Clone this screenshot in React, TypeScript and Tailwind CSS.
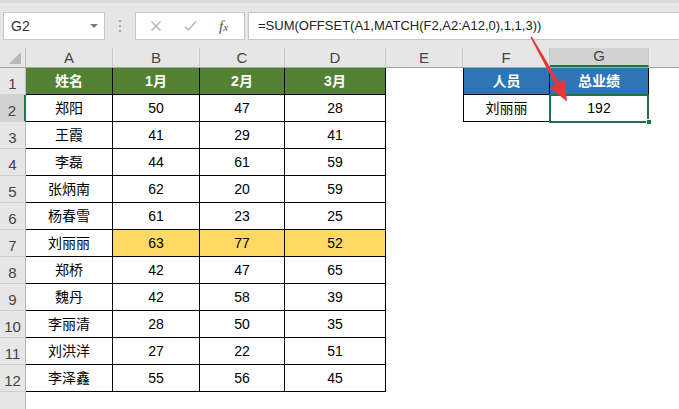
import React from "react";

const cols = [
  { key: "A", w: "w-[87px]" },
  { key: "B", w: "w-[87px]" },
  { key: "C", w: "w-[85px]" },
  { key: "D", w: "w-[101px]" },
  { key: "E", w: "w-[77px]" },
  { key: "F", w: "w-[87px]" },
  { key: "G", w: "w-[99px]" },
];

const data = [
  ["郑阳", 50, 47, 28],
  ["王霞", 41, 29, 41],
  ["李磊", 44, 61, 59],
  ["张炳南", 62, 20, 59],
  ["杨春雪", 61, 23, 25],
  ["刘丽丽", 63, 77, 52],
  ["郑桥", 42, 47, 65],
  ["魏丹", 42, 58, 39],
  ["李丽清", 28, 50, 35],
  ["刘洪洋", 27, 22, 51],
  ["李泽鑫", 55, 56, 45],
];

function RowHead({ n, active }: { n?: number; active?: boolean }) {
  return (
    <div
      className={
        "flex h-full w-[26px] shrink-0 items-end justify-center border-b border-[#d0d0d0] pb-[1px] text-[15px] leading-[18px] text-[#444] " +
        (active
          ? "border-r-2 border-r-[#217346] bg-[#d2d2d2]"
          : "border-r border-r-[#bdbdbd] bg-[#e6e6e6]")
      }
    >
      {n}
    </div>
  );
}

function Arrow() {
  return (
    <svg
      className="pointer-events-none absolute left-0 top-0"
      width="679"
      height="409"
      viewBox="0 0 679 409"
    >
      <polygon
        points="530.4,37.3 531.8,36.6 559.2,82.4 564.4,79.4 567,101.5 549.8,87.7 555.2,84.6"
        fill="#e4373a"
      />
    </svg>
  );
}

export default function App() {
  return (
    <div className="relative h-[409px] w-[679px] overflow-hidden bg-white font-['Liberation_Sans','Noto_Sans_CJK_SC',sans-serif] text-black">
      {/* barra de fórmulas */}
      <div className="flex h-[48px] items-start border-t-[3px] border-t-[#d9d9d9] bg-[#e6e6e6] pt-[9px]">
        <div className="ml-[3px] flex h-[28px] w-[102px] items-center justify-between border border-[#c6c6c6] bg-white pl-[7px] pr-[6px]">
          <span className="text-[14px] text-[#333]">G2</span>
          <span className="h-0 w-0 border-x-[4px] border-t-[4px] border-x-transparent border-t-[#7a7a7a]" />
        </div>
        <div className="flex h-[28px] w-[30px] flex-col items-center justify-center gap-[3px]">
          <span className="h-[2px] w-[2px] bg-[#a8a8a8]" />
          <span className="h-[2px] w-[2px] bg-[#a8a8a8]" />
          <span className="h-[2px] w-[2px] bg-[#a8a8a8]" />
        </div>
        <div className="flex h-[28px] w-[110px] items-center border border-[#c6c6c6] bg-white">
          <svg className="ml-[14px]" width="12" height="12" viewBox="0 0 12 12">
            <path d="M1.5 1.5 L10.5 10.5 M10.5 1.5 L1.5 10.5" stroke="#b3b3b3" strokeWidth="1.4" />
          </svg>
          <svg className="ml-[22px]" width="13" height="12" viewBox="0 0 13 12">
            <path d="M1 6.5 L4.5 10 L12 1.5" stroke="#b3b3b3" strokeWidth="1.5" fill="none" />
          </svg>
          <span className="ml-[22px] font-['Liberation_Serif',serif] text-[15px] italic text-[#555]">
            f<span className="text-[11px]">x</span>
          </span>
        </div>
        <div className="ml-[3px] flex h-[28px] flex-1 items-center border border-r-0 border-[#c6c6c6] bg-white pl-[9px] text-[13px] text-[#222]">
          =SUM(OFFSET(A1,MATCH(F2,A2:A12,0),1,1,3))
        </div>
      </div>

      {/* cabeçalho de colunas */}
      <div className="flex h-[20px] border-b border-[#a6a6a6] bg-[#e6e6e6]">
        <div className="relative w-[26px] shrink-0 border-r border-[#bdbdbd]">
          <span className="absolute bottom-[3px] right-[4px] h-0 w-0 border-b-[12px] border-l-[12px] border-b-[#b7b7b7] border-l-transparent" />
        </div>
        {cols.map((c) => (
          <div
            key={c.key}
            className={
              c.w +
              " flex shrink-0 items-end justify-center border-r border-[#c9c9c9] text-[15px] leading-[18px] text-[#444] " +
              (c.key === "G" ? "border-b-2 border-b-[#217346] bg-[#d2d2d2]" : "")
            }
          >
            {c.key}
          </div>
        ))}
        <div className="flex-1" />
      </div>

      {/* linha 1 */}
      <div className="flex h-[27px]">
        <RowHead n={1} />
        {["姓名", "1月", "2月", "3月"].map((t, i) => (
          <div
            key={t}
            className={
              cols[i].w +
              " flex shrink-0 items-center justify-center border-b border-r border-black bg-[#548235] text-[14px] font-bold text-white"
            }
          >
            {t}
          </div>
        ))}
        <div className="w-[77px] shrink-0" />
        <div className="flex w-[87px] shrink-0 items-center justify-center border-b border-l border-r border-black bg-[#2e75b6] text-[14px] font-bold text-white">
          人员
        </div>
        <div className="flex w-[99px] shrink-0 items-center justify-center border-b border-r border-black bg-[#2e75b6] text-[14px] font-bold text-white">
          总业绩
        </div>
      </div>

      {data.map((row, r) => {
        const n = r + 2;
        const hl = n === 7;
        return (
          <div key={n} className="flex h-[27px]">
            <RowHead n={n} active={n === 2} />
            {row.map((v, i) => (
              <div
                key={i}
                className={
                  cols[i].w +
                  " flex shrink-0 items-center justify-center border-b border-r border-black text-[14px] " +
                  (hl && i > 0 ? "bg-[#ffd966]" : "")
                }
              >
                {v}
              </div>
            ))}
            {n === 2 && (
              <>
                <div className="w-[77px] shrink-0" />
                <div className="flex w-[87px] shrink-0 items-center justify-center border-b border-l border-r border-black text-[14px]">
                  刘丽丽
                </div>
                <div className="relative flex w-[99px] shrink-0 items-center justify-center border-b border-r border-black text-[14px]">
                  192
                  <span className="absolute -left-[1px] -top-[1px] h-[29px] w-[100px] border-2 border-[#217346]" />
                  <span className="absolute -bottom-[4px] -right-[4px] h-[6px] w-[6px] border border-white bg-[#217346]" />
                </div>
              </>
            )}
          </div>
        );
      })}

      <div className="flex h-[40px]">
        <RowHead />
      </div>

      <Arrow />
    </div>
  );
}
